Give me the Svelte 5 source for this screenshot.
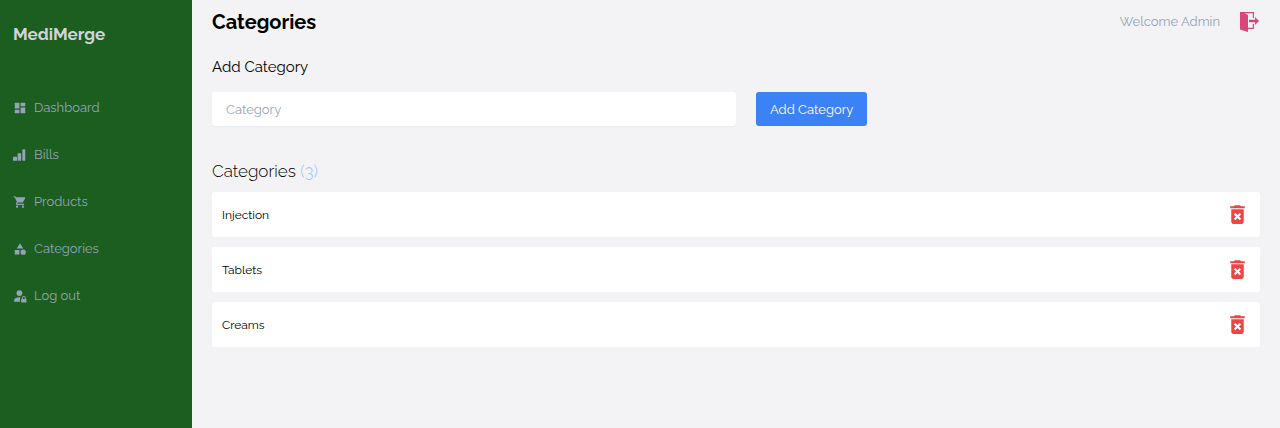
<script>
    let name = $state('');
    let categories = $state(['Injection', 'Tablets', 'Creams']);

    const links = [
        { label: 'Dashboard', href: '#dashboard', icon: 'M3 13h8V3H3v10zm0 8h8v-6H3v6zm10 0h8V11h-8v10zm0-18v6h8V3h-8z' },
        { label: 'Bills', href: '#bills', icon: 'M1 15h5a1 1 0 0 1 1 1v5a1 1 0 0 1-1 1H1a1 1 0 0 1-1-1v-5a1 1 0 0 1 1-1zM9 9h4a1 1 0 0 1 1 1v11a1 1 0 0 1-1 1H9a1 1 0 0 1-1-1V10a1 1 0 0 1 1-1zM17 2h3a1 1 0 0 1 1 1v18a1 1 0 0 1-1 1h-3a1 1 0 0 1-1-1V3a1 1 0 0 1 1-1z' },
        { label: 'Products', href: '#products', icon: 'M7 18c-1.1 0-1.99.9-1.99 2S5.9 22 7 22s2-.9 2-2-.9-2-2-2zM1 2v2h2l3.6 7.59-1.35 2.45c-.16.28-.25.61-.25.96 0 1.1.9 2 2 2h12v-2H7.42c-.14 0-.25-.11-.25-.25l.03-.12.9-1.63h7.45c.75 0 1.41-.41 1.75-1.03l3.58-6.49A1 1 0 0 0 20 4H5.21l-.94-2H1zm16 16c-1.1 0-1.99.9-1.99 2s.89 2 1.99 2 2-.9 2-2-.9-2-2-2z' },
        { label: 'Categories', href: '#categories', icon: 'M12 2l-5.5 9h11zM17.5 13a4.5 4.5 0 1 0 0 9 4.5 4.5 0 1 0 0-9zM3 13.5h8v8H3z' },
        { label: 'Log out', href: '#logout', icon: 'M11 2a5 5 0 1 0 0 10 5 5 0 1 0 0-10zM11 14c-5 0-9 2-9 5v3h10v-6l1-2zM18.5 12a3.5 3.5 0 0 0-3.5 3.5V17h-1v6h9v-6h-1v-1.500a3.500 3.500 0 0 0-3.500-3.500zm0 1.700c1 0 1.800.8 1.800 1.800V17h-3.600v-1.500c0-1 .8-1.800 1.800-1.800z' }
    ];

    function addCategory(e) {
        e.preventDefault();
        if (name.trim()) {
            categories.push(name.trim());
            name = '';
        }
    }

    function removeCategory(i) {
        categories.splice(i, 1);
    }
</script>

<div class="page">
    <aside>
        <div class="brand">MediMerge</div>
        <nav>
            {#each links as link}
                <a href={link.href}>
                    <svg viewBox="0 0 24 24" width="14" height="14" aria-hidden="true"><path d={link.icon} /></svg>
                    {link.label}
                </a>
            {/each}
        </nav>
    </aside>

    <main>
        <header>
            <h1>Categories</h1>
            <div class="user">
                <span>Welcome Admin</span>
                <button class="icon" aria-label="Log out">
                    <svg viewBox="0 0 20 20" width="20" height="20" aria-hidden="true">
                        <path d="M0 0h14v6h-1.200V1.200H4.500L8 3v12.800h4.800V12H14v5H8v3l-8-2.500z" />
                        <path d="M9 7.700h6V5l4 4-4 4v-2.700H9z" />
                    </svg>
                </button>
            </div>
        </header>

        <form onsubmit={addCategory}>
            <label for="category">Add Category</label>
            <div class="fields">
                <input id="category" type="text" placeholder="Category" bind:value={name} />
                <button class="add" type="submit">Add Category</button>
            </div>
        </form>

        <h2>Categories <span>({categories.length})</span></h2>
        <ul>
            {#each categories as category, i}
                <li>
                    {category}
                    <button class="icon delete" aria-label="Delete {category}" onclick={() => removeCategory(i)}>
                        <svg viewBox="0 0 24 24" width="25" height="25" aria-hidden="true">
                            <path d="M6 19c0 1.1.9 2 2 2h8c1.1 0 2-.9 2-2V7H6v12zm2.46-7.12l1.41-1.41L12 12.59l2.12-2.12 1.41 1.41L13.41 14l2.12 2.12-1.41 1.41L12 15.41l-2.12 2.12-1.41-1.41L10.59 14l-2.13-2.12zM15.5 4l-1-1h-5l-1 1H5v2h14V4z" />
                        </svg>
                    </button>
                </li>
            {/each}
        </ul>
    </main>
</div>

<style>
    :global(body) {
        margin: 0;
    }
    .page {
        display: flex;
        min-height: 100vh;
        background: #f3f3f6;
        color: #000;
        font-family: Raleway, Lato, sans-serif;
        font-size: 13px;
        font-weight: 400;
    }
    svg {
        display: block;
        fill: currentColor;
    }
    h1, h2, ul {
        margin: 0;
        padding: 0;
    }
    button, input {
        border: 0;
        font: inherit;
    }
    aside {
        width: 15%;
        box-sizing: border-box;
        padding: 22px 13px;
        background: #1b5e20;
        color: #94a3b8;
    }
    .brand {
        color: #d1d5db;
        font-size: 17px;
        font-weight: 700;
        line-height: 24px;
    }
    nav {
        display: flex;
        flex-direction: column;
        gap: 23px;
        margin-top: 50px;
    }
    nav a {
        display: flex;
        align-items: center;
        gap: 7px;
        color: inherit;
        line-height: 24px;
        text-decoration: none;
    }
    main {
        flex: 1;
        padding: 0 20px 20px;
    }
    header {
        display: flex;
        justify-content: space-between;
        align-items: center;
        height: 43px;
    }
    h1 {
        font-size: 20px;
        font-weight: 700;
    }
    .user {
        display: flex;
        align-items: center;
        gap: 20px;
        color: #94a3b8;
    }
    .icon {
        padding: 0;
        background: none;
        color: #d9467a;
        cursor: pointer;
    }
    label {
        display: block;
        margin-top: 12px;
        font-size: 15px;
        line-height: 24px;
    }
    .fields {
        display: flex;
        align-items: center;
        gap: 20px;
        margin-top: 13px;
    }
    input {
        width: 50%;
        height: 34px;
        box-sizing: border-box;
        padding: 0 14px;
        border-radius: 3px;
        background: #fff;
        box-shadow: 0 1px 1px #e9eaee;
    }
    input::placeholder {
        color: #9ca3af;
        opacity: 1;
    }
    .add {
        height: 34px;
        padding: 0 14px;
        border-radius: 3px;
        background: #3b82f6;
        color: #fff;
        cursor: pointer;
    }
    h2 {
        margin-top: 33px;
        font-size: 17px;
        font-weight: 300;
        line-height: 24px;
    }
    h2 span {
        color: #93c5fd;
    }
    ul {
        display: flex;
        flex-direction: column;
        gap: 10px;
        margin-top: 9px;
        list-style: none;
    }
    li {
        display: flex;
        justify-content: space-between;
        align-items: center;
        padding: 10px;
        border-radius: 3px;
        background: #fff;
        font-size: 12px;
    }
    .delete {
        color: #ef4444;
    }
</style>
